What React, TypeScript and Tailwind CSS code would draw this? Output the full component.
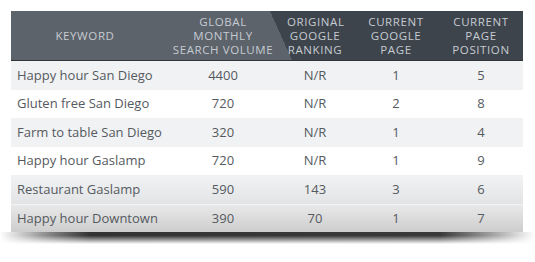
const rows = [
  { keyword: 'Happy hour San Diego', volume: '4400', original: 'N/R', page: '1', position: '5' },
  { keyword: 'Gluten free San Diego', volume: '720', original: 'N/R', page: '2', position: '8' },
  { keyword: 'Farm to table San Diego', volume: '320', original: 'N/R', page: '1', position: '4' },
  { keyword: 'Happy hour Gaslamp', volume: '720', original: 'N/R', page: '1', position: '9' },
  { keyword: 'Restaurant Gaslamp', volume: '590', original: '143', page: '3', position: '6' },
  { keyword: 'Happy hour Downtown', volume: '390', original: '70', page: '1', position: '7' },
];

const rowBg = [
  'bg-[#f1f2f4]',
  'bg-white',
  'bg-[#f1f2f4]',
  'bg-white',
  'bg-[linear-gradient(to_bottom,#f1f2f4,#e3e4e6)]',
  'bg-[linear-gradient(to_bottom,#e9e9e9,#cdcdcd)] border-t border-[#f4f4f4]',
];

const cols = 'grid grid-cols-[148px_128px_56px_106px_74px]';

export default function App() {
  return (
    <div className="w-[535px] h-[262px] bg-white pt-[11px] font-['Open_Sans',sans-serif]">
      <div className="relative w-[512px] ml-[11px]">
        <div className={`${cols} h-[50px] items-center text-[11.5px] leading-[14px] tracking-[0.6px] uppercase text-[#c6cbd1] bg-[linear-gradient(to_right,#5c636b_0,#5c636b_265px,#3d444c_265px)] border-b border-[#2f353b] relative overflow-hidden`}>
          <div className="absolute top-0 bottom-0 left-[259px] w-[22px] bg-[linear-gradient(to_top_right,#5c636b_50%,#3d444c_50%)]" />
          <div className="relative text-center">Keyword</div>
          <div className="relative text-center">Global<br />Monthly<br />Search Volume</div>
          <div className="relative text-center">Original<br />Google<br />Ranking</div>
          <div className="relative text-center">Current<br />Google<br />Page</div>
          <div className="relative text-center pr-[10px]">Current<br />Page<br />Position</div>
        </div>
        {rows.map((r, i) => (
          <div key={r.keyword} className={`${cols} h-[28.5px] items-center text-[13px] text-[#555a60] ${rowBg[i]}`}>
            <div className="pl-[6px] whitespace-nowrap">{r.keyword}</div>
            <div className="text-center">{r.volume}</div>
            <div className="text-center">{r.original}</div>
            <div className="text-center">{r.page}</div>
            <div className="text-center pr-[10px]">{r.position}</div>
          </div>
        ))}
      </div>
      <div className="w-[535px] h-[12px] bg-[linear-gradient(to_right,rgba(255,255,255,0)_0px,rgba(50,50,50,0.6)_50px,#333_90px,#3a3a3a_440px,rgba(60,60,60,0.5)_490px,rgba(255,255,255,0)_535px)] [mask-image:linear-gradient(to_bottom,black_30%,transparent)]" />
    </div>
  );
}
